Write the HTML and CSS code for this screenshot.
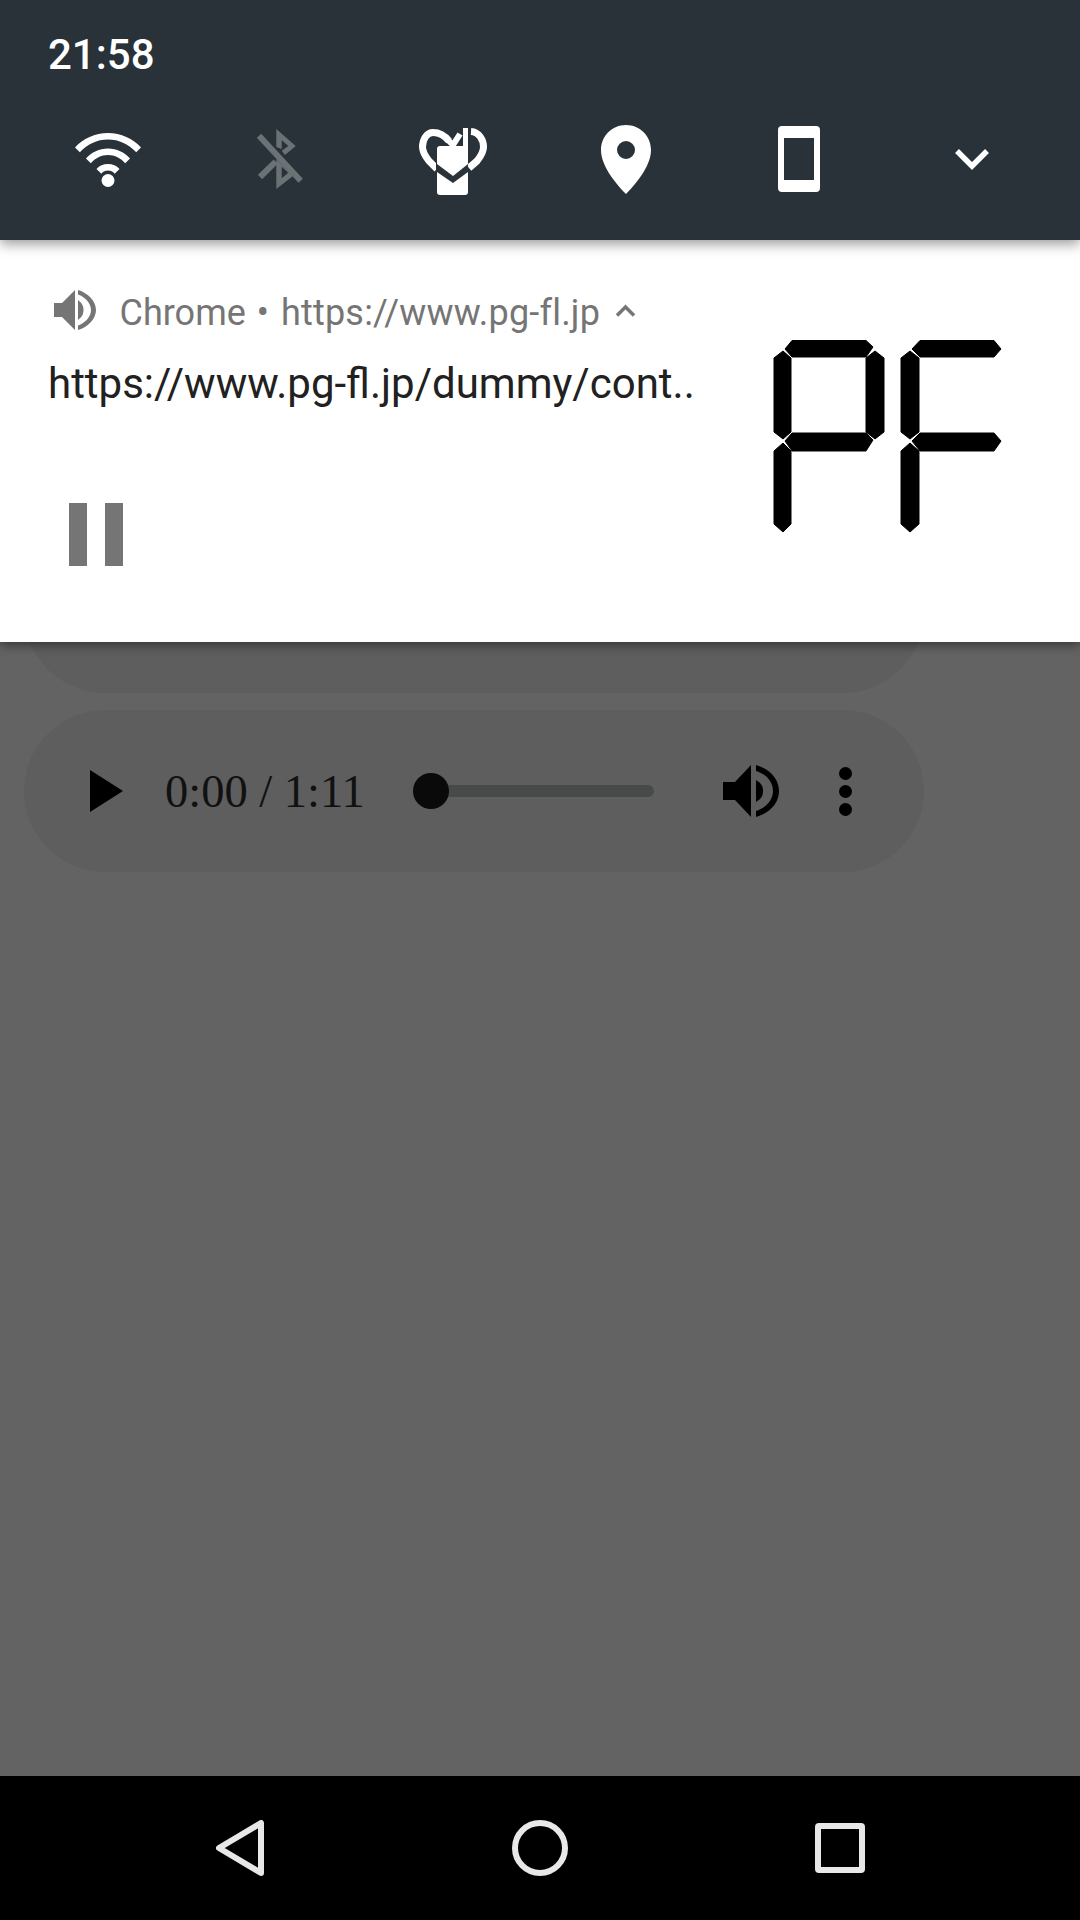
FILE: index.html
```html
<!DOCTYPE html>
<html lang="en">
<head>
<meta charset="utf-8">
<title>Media notification</title>
<link rel="stylesheet" href="styles.css">
</head>
<body>
<div class="screen">
  <header class="shade">
    <div class="clock">21:58</div>
    <div class="quick">
      <div class="qs qs-wifi"><svg class="ic" width="66" height="54" viewBox="0 0 66 54"><path fill="#fff" d="M0 14.500C8 5.500 20 0 33 0s25 5.500 33 14.500l-4.800 4.800C54 11.300 44 6.500 33 6.500S12 11.300 4.800 19.300z"/><path fill="#fff" d="M11 25.500C16.500 19.300 24.300 15.500 33 15.500s16.500 3.800 22 10l-4.800 4.800C45.900 25.200 39.800 22 33 22s-12.900 3.200-17.200 8.300z"/><path fill="#fff" d="M21.500 36C24.300 32.800 28.400 31 33 31s8.700 1.800 11.500 5l-4.800 4.700C38 38.700 35.600 37.500 33 37.500s-5 1.200-6.700 3.200z"/><circle fill="#fff" cx="33" cy="47.500" r="6.500"/></svg></div>
      <div class="qs qs-bt"><svg class="ic" width="48" height="60" viewBox="0 0 48 60"><path fill="#6b7276" d="M21.300 0 40.700 17 30 26 26.700 21.700 33.300 17 26.700 11V20L21.300 18z"/><path fill="#6b7276" fill-rule="evenodd" d="M21.300 30 38 47 21.300 60zM26.700 37.700V49.300L33.300 43.700z"/><path fill="none" stroke="#6b7276" stroke-width="6" d="M4 6.700 45.700 51.700M5 48 20.700 32.700"/></svg></div>
      <div class="qs qs-heart"><svg class="ic" width="68" height="67" viewBox="0 0 68 67"><path fill="none" stroke="#fff" stroke-width="7" d="M30 13C26 8 20 4.500 14 4.500 8 4.500 3.500 11 3.500 19 3.500 25 7 29 10 33L18 41"/><path fill="none" stroke="#fff" stroke-width="6" d="M27 10 34 17 41 6"/><path fill="none" stroke="#fff" stroke-width="7" d="M52 3.500C60 4 64.500 12 64.500 19 64.500 25 61 29 58 33L50 40"/><rect fill="#fff" x="44" y="0" width="5" height="20"/><rect fill="#fff" x="18" y="18" width="31" height="49" rx="3"/><path fill="#2a333a" d="M18 36 34 48 49 36V44L34 55 18 44z"/><rect fill="#2a333a" x="17" y="29" width="1" height="15"/></svg></div>
      <div class="qs"><svg class="ic" width="50" height="69" viewBox="0 0 50 69"><path fill-rule="evenodd" fill="#fff" d="M25 0C39 0 50 11 50 25 50 39 38 56 25 69 12 56 0 39 0 25 0 11 11 0 25 0ZM25 16A9 9 0 1 0 25 34 9 9 0 1 0 25 16Z"/></svg></div>
      <div class="qs"><svg class="ic" width="42" height="66" viewBox="0 0 42 66"><path fill-rule="evenodd" fill="#fff" d="M4 0H38A4 4 0 0 1 42 4V62A4 4 0 0 1 38 66H4A4 4 0 0 1 0 62V4A4 4 0 0 1 4 0ZM6 12V54H36V12Z"/></svg></div>
      <div class="qs"><svg class="ic" width="34" height="21" viewBox="0 0 34 21"><path fill="none" stroke="#fff" stroke-width="5.500" d="M2 2 17 17 32 2"/></svg></div>
    </div>
  </header>

  <section class="notif">
    <div class="notif-body">
      <div class="meta">
        <svg class="meta-speaker" width="42" height="40" viewBox="0 0 42 40"><path fill="#757575" d="M0 13H8L21 0V40L8 27H0z"/><path fill="#757575" d="M24 10C28 13 29.500 16 29.500 20S28 27 24 30z"/><path fill="#757575" d="M24 0C34 3 42 11 42 20S34 37 24 40V35.500C31 33 37 27 37 20S31 7 24 4.500z"/></svg>
        <span class="meta-text">Chrome</span>
        <span class="meta-text meta-dot">•</span>
        <span class="meta-text meta-url">https://www.pg-fl.jp</span>
        <svg class="meta-caret" width="21" height="13" viewBox="0 0 21 13"><path fill="none" stroke="#757575" stroke-width="3.500" d="M2 11.500 10.500 3 19 11.500"/></svg>
      </div>
      <div class="title">https://www.pg-fl.jp/dummy/cont..</div>
      <div class="action">
        <span class="bar"></span><span class="bar"></span>
      </div>
    </div>
    <svg class="art" width="230" height="194" viewBox="0 0 230 194">
      <g fill="#000" stroke="#000" stroke-width="1" stroke-linejoin="round">
        <path d="M19 0.500H93L100 7 93 17H19L12 9z"/>
        <path d="M10 11 18 18V92L10 99 1 92V18z"/>
        <path d="M102 11 111 18V92L102 99 93 92V18z"/>
        <path d="M19 93H93L100 100 93 111H19L12 101z"/>
        <path d="M10 103 18 111V184L10 192 1 184V111z"/>
        <path d="M147 0.500H221L228 9 221 17H147L139 9z"/>
        <path d="M137 11 146 18V92L137 99 128 92V18z"/>
        <path d="M147 93H221L228 101 221 111H147L139 101z"/>
        <path d="M137 103 146 111V184L137 192 128 184V111z"/>
      </g>
    </svg>
  </section>

  <main class="page">
    <div class="player player-prev"></div>
    <div class="player">
      <svg class="pl-play" width="33" height="42" viewBox="0 0 33 42"><path d="M0 0 33 21 0 42z"/></svg>
      <span class="pl-time">0:00 / 1:11</span>
      <div class="pl-track"><span class="pl-thumb"></span></div>
      <svg class="pl-vol" width="56" height="52" viewBox="0 0 56 52"><path d="M0 17H12L28 0V52L12 35H0z"/><path d="M33 15C38 18 40 21 40 26S38 34 33 37z"/><path d="M33 0C47 4 56 14 56 26S47 48 33 52V46C43 43 50 35 50 26S43 9 33 6z"/></svg>
      <div class="pl-more"><span></span><span></span><span></span></div>
    </div>
  </main>

  <nav class="navbar">
    <svg width="48" height="56" viewBox="0 0 48 56"><path fill="none" stroke="#e8e8e8" stroke-width="6" stroke-linejoin="round" d="M45 3V53L3 28z"/></svg>
    <svg width="56" height="56" viewBox="0 0 56 56"><circle fill="none" stroke="#e8e8e8" stroke-width="6" cx="28" cy="28" r="25"/></svg>
    <svg width="50" height="50" viewBox="0 0 50 50"><rect fill="none" stroke="#e8e8e8" stroke-width="6" x="3" y="3" width="44" height="44" rx="1"/></svg>
  </nav>
</div>
</body>
</html>
```
FILE: styles.css
```css
* { box-sizing: border-box; }
html, body { margin: 0; padding: 0; }
body { width: 1080px; height: 1920px; overflow: hidden; font-family: Roboto, sans-serif; }
.screen { width: 1080px; height: 1920px; display: flex; flex-direction: column; background: #636363; }

.shade { height: 240px; background: #283238; flex: none; position: relative; z-index: 2; padding: 30px 0 0 48px; box-shadow: 0 4px 12px rgba(0,0,0,.4); }
.clock { color: #fff; font-size: 42px; line-height: 49px; font-weight: 500; }
.quick { display: grid; grid-template-columns: repeat(6, 173px); margin: 34px 0 0 -28px; height: 92px; }
.qs { display: flex; align-items: center; justify-content: center; }
.qs-wifi { padding: 2px 0 0 2px; }
.qs-bt { padding-right: 1px; }
.qs-heart { padding-top: 5px; }
.ic { display: block; }

.notif { height: 402px; background: #fff; flex: none; position: relative; z-index: 1; display: flex; justify-content: space-between; box-shadow: 0 3px 10px rgba(0,0,0,.45); padding: 0 77px 0 48px; }
.notif-body { display: flex; flex-direction: column; }
.meta { display: flex; align-items: center; margin: 50px 0 0 6px; height: 40px; }
.meta-speaker { flex: none; }
.meta-text { color: #757575; font-size: 36px; margin-left: 23.500px; padding-top: 5px; white-space: nowrap; }
.meta-dot { margin-left: 11px; }
.meta-url { margin-left: 12px; letter-spacing: .2px; }
.meta-caret { margin-left: 15px; flex: none; }
.title { color: #212121; font-size: 42px; line-height: 50px; margin-top: 29px; white-space: nowrap; }
.action { display: flex; gap: 18px; margin: 94px 0 0 21px; }
.bar { width: 18px; height: 63px; background: #757575; display: block; }
.art { margin-top: 100px; flex: none; }

.page { flex: 1; padding: 0 0 0 24px; margin-top: -11px; display: flex; flex-direction: column; gap: 17px; overflow: hidden; }
.player { width: 900px; height: 162px; flex: none; border-radius: 81px; background: #5e5e5e; display: flex; align-items: center; padding-left: 66px; }
.player-prev { margin-top: -100px; }
.pl-play { flex: none; }
.pl-time { font-family: "Liberation Serif", serif; font-size: 46.500px; color: #111; margin-left: 42px; white-space: nowrap; }
.pl-track { width: 241px; height: 12px; background: #484a49; border-radius: 6px; margin-left: 48.500px; display: flex; align-items: center; flex: none; }
.pl-thumb { width: 36px; height: 36px; border-radius: 50%; background: #0a0a0a; display: block; flex: none; }
.pl-vol { margin-left: 69px; flex: none; }
.pl-more { display: flex; flex-direction: column; gap: 5px; margin-left: 60px; }
.pl-more span { width: 13px; height: 13px; border-radius: 50%; background: #000; display: block; }

.navbar { height: 144px; background: #000; flex: none; display: grid; grid-template-columns: repeat(3, 300px); padding-left: 90px; align-items: center; justify-items: center; }
```
